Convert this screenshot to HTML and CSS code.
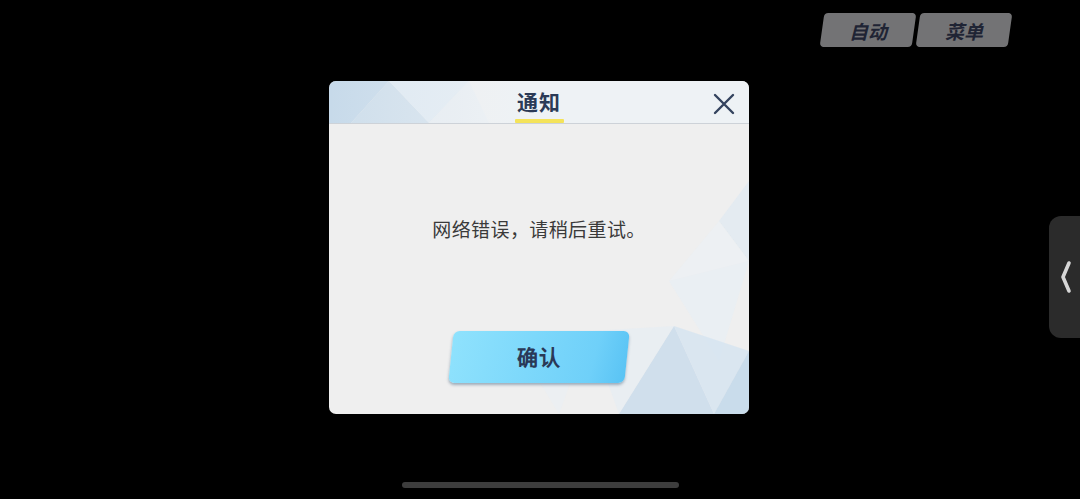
FILE: index.html
```html
<!DOCTYPE html>
<html lang="zh-CN">
<head>
<meta charset="utf-8">
<title>通知</title>
<link rel="stylesheet" href="styles.css">
</head>
<body>
<div class="screen">
  <header class="topbar">
    <button class="chip"><span>自动</span></button>
    <button class="chip"><span>菜单</span></button>
  </header>

  <main class="stage">
    <section class="dialog">
      <svg class="deco" viewBox="0 0 420 333" preserveAspectRatio="none" aria-hidden="true">
        <!-- header facets, top-left -->
        <polygon points="0,0 60,0 22,42 0,42" fill="#b9d3e8" opacity="0.75"/>
        <polygon points="22,42 60,0 100,42" fill="#cadcea" opacity="0.9"/>
        <polygon points="60,0 140,0 100,42" fill="#d9e7f2" opacity="0.8"/>
        <polygon points="100,42 140,0 160,42" fill="#e2ebf2" opacity="0.7"/>
        <!-- body facets, lower right -->
        <polygon points="420,100 420,180 390,140" fill="#dce8f2" opacity="0.6"/>
        <polygon points="340,200 420,180 390,280" fill="#e6eef5" opacity="0.55"/>
        <polygon points="390,140 420,180 340,200" fill="#ebf1f6" opacity="0.55"/>
        <polygon points="290,333 345,245 385,333" fill="#c8dbeb" opacity="0.8"/>
        <polygon points="345,245 420,270 385,333" fill="#d3e3f0" opacity="0.75"/>
        <polygon points="385,333 420,270 420,333" fill="#c2d8ea" opacity="0.85"/>
        <polygon points="260,250 345,245 290,333" fill="#e4edf4" opacity="0.6"/>
        <polygon points="180,250 260,250 230,333" fill="#eaf0f5" opacity="0.5"/>
      </svg>

      <div class="dialog-head">
        <h2 class="dialog-title">通知</h2>
        <button class="close" aria-label="关闭">
          <svg viewBox="0 0 24 24" width="24" height="24">
            <path d="M3 3 L21 21 M21 3 L3 21" stroke="#34435e" stroke-width="2.4" stroke-linecap="round" fill="none"/>
          </svg>
        </button>
      </div>

      <div class="dialog-body">
        <p class="message">网络错误，请稍后重试。</p>
        <button class="confirm"><span>确认</span></button>
      </div>
    </section>
  </main>

  <aside class="side-tab">
    <svg viewBox="0 0 14 34" width="14" height="34">
      <path d="M10 3 L4 17 L10 31" stroke="#d6d6d6" stroke-width="3.6" stroke-linecap="round" stroke-linejoin="round" fill="none"/>
    </svg>
  </aside>

  <div class="home-bar"></div>
</div>
</body>
</html>
```

FILE: styles.css
```css
* { box-sizing: border-box; }

html, body {
  margin: 0;
  padding: 0;
  background: #000;
}

body {
  font-family: "Noto Sans CJK SC", "Noto Sans", sans-serif;
}

.screen {
  position: relative;
  width: 1080px;
  height: 499px;
  overflow: hidden;
  display: flex;
  flex-direction: column;
}

/* top-right toolbar */
.topbar {
  display: flex;
  justify-content: flex-end;
  gap: 4px;
  padding: 13px 70px 0 0;
  height: 47px;
}

.chip {
  width: 92px;
  height: 34px;
  border: none;
  padding: 0;
  background: #737375;
  border-radius: 4px;
  transform: skewX(-8deg);
  display: flex;
  align-items: center;
  justify-content: center;
}

.chip span {
  display: block;
  transform: skewX(8deg);
  font-family: "Noto Sans CJK SC", sans-serif;
  font-size: 19px;
  font-weight: 700;
  font-style: italic;
  color: #1f2434;
  line-height: 1;
  letter-spacing: 0;
}

/* modal */
.stage {
  flex: 1;
  display: flex;
  justify-content: center;
  padding-top: 34px;
  padding-right: 2px;
}

.dialog {
  position: relative;
  width: 420px;
  height: 333px;
  background: #efefef;
  border-radius: 7px;
  overflow: hidden;
  display: flex;
  flex-direction: column;
}

.deco {
  position: absolute;
  inset: 0;
  width: 100%;
  height: 100%;
}

.dialog-head {
  position: relative;
  height: 43px;
  background: linear-gradient(90deg, rgba(238,242,246,0) 0%, rgba(238,242,246,0.4) 30%, #eef2f5 45%, #eef2f5 100%);
  border-bottom: 1px solid #cdd2d8;
  display: flex;
  align-items: center;
  justify-content: center;
}

.dialog-title {
  margin: 0;
  position: relative;
  font-size: 21px;
  font-weight: 700;
  color: #2b3a56;
  line-height: 1;
  padding-bottom: 2px;
  letter-spacing: 1px;
}

.dialog-title::after {
  content: "";
  position: absolute;
  left: -2px;
  right: -3px;
  bottom: -9px;
  height: 4px;
  background: #f4e35a;
  border-radius: 1px;
}

.close {
  position: absolute;
  right: 13px;
  top: 11px;
  width: 24px;
  height: 24px;
  padding: 0;
  border: none;
  background: transparent;
}

.close svg { display: block; }

.dialog-body {
  position: relative;
  flex: 1;
  display: flex;
  flex-direction: column;
  align-items: center;
  padding-top: 93px;
}

.message {
  margin: 0;
  font-size: 19px;
  color: #3a3a3a;
  line-height: 24px;
  letter-spacing: 0.4px;
}

.confirm {
  margin-top: 90px;
  width: 176px;
  height: 52px;
  padding: 0;
  border: none;
  border-radius: 6px;
  transform: skewX(-6deg);
  background: linear-gradient(100deg, #8fe2fd 0%, #7dd8fb 45%, #6fd0f9 80%, #59c3f4 100%);
  box-shadow: 0 2px 3px rgba(60, 90, 120, 0.45);
  display: flex;
  align-items: center;
  justify-content: center;
}

.confirm span {
  display: block;
  transform: skewX(6deg);
  font-size: 21px;
  font-weight: 700;
  color: #2a3957;
  line-height: 1;
  letter-spacing: 1px;
}

/* edge overlays */
.side-tab {
  position: absolute;
  right: 0;
  top: 216px;
  width: 31px;
  height: 122px;
  background: #2b2b2b;
  border-radius: 12px 0 0 12px;
  display: flex;
  align-items: center;
  justify-content: center;
  padding-left: 2px;
}

.side-tab svg { display: block; }

.home-bar {
  position: absolute;
  left: 402px;
  top: 482px;
  width: 277px;
  height: 6px;
  border-radius: 3px;
  background: #3d3d3d;
}
```
